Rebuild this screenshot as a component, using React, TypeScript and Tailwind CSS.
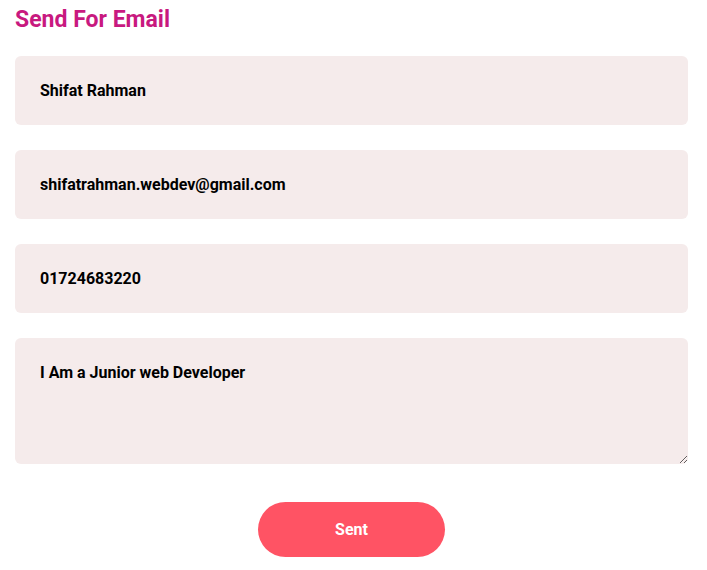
import React from "react";

const font = { fontFamily: "'Roboto', 'Liberation Sans', sans-serif" };

export default function App() {
  return (
    <div className="bg-white min-h-screen px-[15px] pt-[6px]" style={font}>
      <form className="w-[673px] flex flex-col">
        <h2 className="text-[23px] font-bold text-[#c8197f] leading-[28px]">
          Send For Email
        </h2>
        <div className="flex flex-col gap-[25px] mt-[22px]">
          <input
            type="text"
            defaultValue="Shifat Rahman"
            className="h-[69px] w-full bg-[#f5ebeb] rounded-[6px] px-[25px] text-[16px] font-bold text-black outline-none"
          />
          <input
            type="email"
            defaultValue="shifatrahman.webdev@gmail.com"
            className="h-[69px] w-full bg-[#f5ebeb] rounded-[6px] px-[25px] text-[16px] font-bold text-black outline-none"
          />
          <input
            type="text"
            defaultValue="01724683220"
            className="h-[69px] w-full bg-[#f5ebeb] rounded-[6px] px-[25px] text-[16px] font-bold text-black outline-none"
          />
          <textarea
            defaultValue="I Am a Junior web Developer"
            className="h-[126px] w-full bg-[#f5ebeb] rounded-[6px] px-[25px] pt-[23px] text-[16px] font-bold text-black outline-none"
          />
        </div>
        <div className="flex justify-center mt-[38px]">
          <button
            type="button"
            className="w-[187px] h-[55px] rounded-full bg-[#ff5364] text-white text-[16px] font-bold"
          >
            Sent
          </button>
        </div>
      </form>
    </div>
  );
}
